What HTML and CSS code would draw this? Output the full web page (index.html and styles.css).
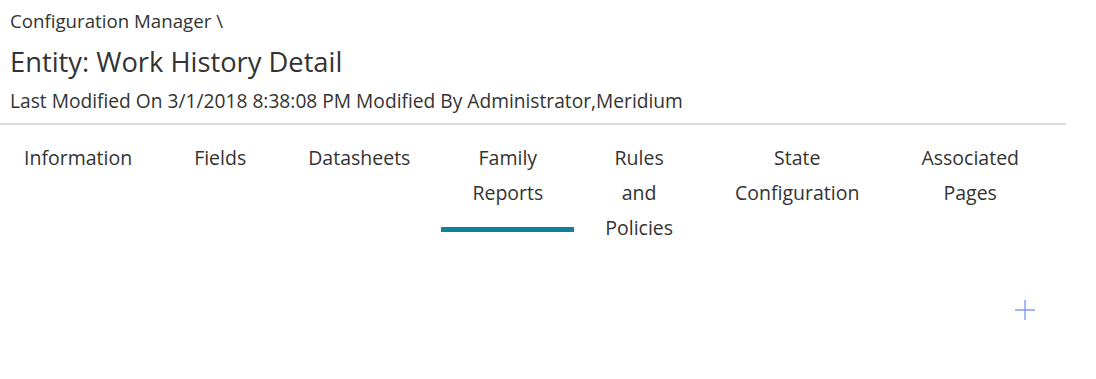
FILE: index.html
```html
<!DOCTYPE html>
<html>
<head>
    <title>Entity: Work History Detail</title>
    <link rel="stylesheet" href="styles.css">
</head>
<body>
    <div class="page">
        <div class="header">
            <div class="breadcrumb">Configuration Manager \</div>
            <h1>Entity: Work History Detail</h1>
            <div class="modified">Last Modified On 3/1/2018 8:38:08 PM Modified By Administrator,Meridium</div>
        </div>
        <div class="tabs">
            <div class="tab">Information</div>
            <div class="tab">Fields</div>
            <div class="tab">Datasheets</div>
            <div class="tab active">Family Reports</div>
            <div class="tab">Rules and Policies</div>
            <div class="tab">State Configuration</div>
            <div class="tab">Associated Pages</div>
        </div>
        <div class="toolbar">
            <button class="add-btn" title="Add">
                <svg width="22" height="22" viewBox="0 0 22 22">
                    <path d="M11 1 V21 M1 11 H21" stroke="#7d9ef8" stroke-width="1.4" fill="none"/>
                </svg>
            </button>
        </div>
    </div>
</body>
</html>
```

FILE: styles.css
```css
body {
    font-family: "Open Sans", Lato, sans-serif;
    margin: 0;
    padding: 0;
    background-color: white;
    color: #333;
}
.page {
    width: 1066px;
}
.header {
    padding: 9px 10px 10px;
    border-bottom: 2px solid #dcdcdc;
}
.breadcrumb {
    font-size: 18.7px;
    line-height: 24px;
}
h1 {
    font-size: 27.3px;
    font-weight: normal;
    margin: 0;
    padding: 12px 0 0;
    line-height: 34px;
}
.modified {
    font-size: 19.2px;
    line-height: 24px;
    padding-top: 10px;
}
.tabs {
    display: flex;
    margin-left: -7px;
    padding-top: 15px;
}
.tab {
    width: min-content;
    padding: 0 31px 7px;
    font-size: 19.5px;
    line-height: 35px;
    text-align: center;
    cursor: pointer;
}
.tab.active {
    border-bottom: 5px solid #12809a;
    height: 92px;
    box-sizing: border-box;
}
.toolbar {
    display: flex;
    justify-content: flex-end;
    padding-top: 47px;
    padding-right: 30px;
}
.add-btn {
    background: none;
    border: none;
    padding: 0;
    cursor: pointer;
    line-height: 0;
}
```
